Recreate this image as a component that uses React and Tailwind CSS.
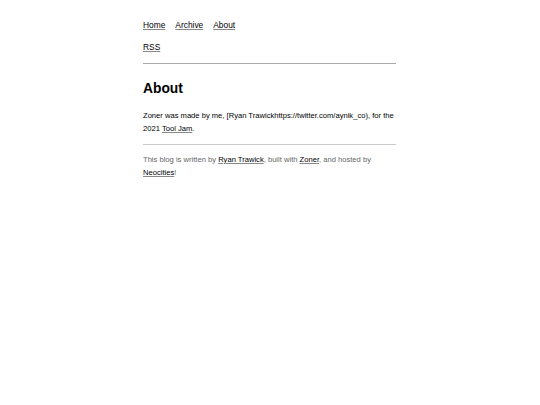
export default function App() {
  return (
    <div className="min-h-[405px] bg-white text-black" style={{ fontFamily: '"Liberation Sans", Arial, sans-serif' }}>
      <div className="ml-[143px] w-[253px] pt-[19px] text-[7.6px] leading-[13px]">
        <nav className="text-[8.4px]">
          <div className="flex gap-[10px]">
            <a href="#" className="underline decoration-[#888]">Home</a>
            <a href="#" className="underline decoration-[#888]">Archive</a>
            <a href="#" className="underline decoration-[#888]">About</a>
          </div>
          <div className="mt-[9px]">
            <a href="#" className="underline decoration-[#888]">RSS</a>
          </div>
        </nav>
        <hr className="mt-[9px] border-t border-[#aaa]" />
        <h1 className="mt-[15px] text-[13.8px] font-bold leading-[20px]">About</h1>
        <p className="mt-[10px]">
          Zoner was made by me, [Ryan Trawickhttps://twitter.com/aynik_co), for the 2021{" "}
          <a href="#" className="underline decoration-[#888]">Tool Jam</a>.
        </p>
        <hr className="mt-[9px] border-t border-[#ccc]" />
        <p className="mt-[8px] text-[#666]">
          This blog is written by <a href="#" className="text-black underline decoration-[#888]">Ryan Trawick</a>, built with{" "}
          <a href="#" className="text-black underline decoration-[#888]">Zoner</a>, and hosted by{" "}
          <a href="#" className="text-black underline decoration-[#888]">Neocities</a>!
        </p>
      </div>
    </div>
  );
}
